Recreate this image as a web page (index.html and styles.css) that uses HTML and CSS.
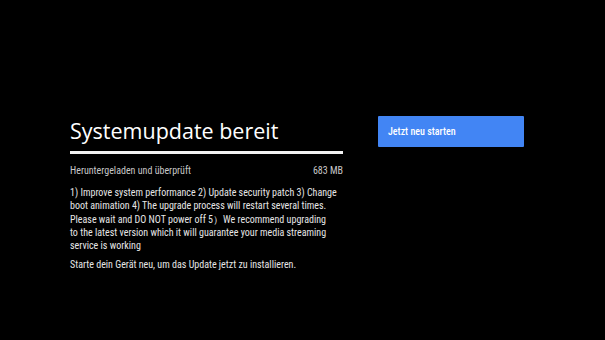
FILE: index.html
```html
<!DOCTYPE html>
<html lang="de">
<head>
    <meta charset="UTF-8">
    <meta name="viewport" content="width=device-width, initial-scale=1.0">
    <title>Systemupdate</title>
    <link rel="stylesheet" href="styles.css">
</head>
<body>
    <div class="screen">
        <div class="info">
            <h1 class="title">Systemupdate bereit</h1>
            <div class="progress"></div>
            <div class="status">
                <span>Heruntergeladen und überprüft</span>
                <span>683 MB</span>
            </div>
            <p class="notes">1) Improve system performance 2) Update security patch 3) Change<br>boot animation 4) The upgrade process will restart several times.<br>Please wait and DO NOT power off 5）We recommend upgrading<br>to the latest version which it will guarantee your media streaming<br>service is working</p>
            <p class="hint">Starte dein Gerät neu, um das Update jetzt zu installieren.</p>
        </div>
        <div class="actions">
            <button class="restart">Jetzt neu starten</button>
        </div>
    </div>
</body>
</html>
```

FILE: styles.css
```css
html, body {
    margin: 0;
    background: #000;
}
body {
    font-family: 'Roboto Condensed', Roboto, sans-serif;
    font-stretch: condensed;
    color: #fff;
    width: 605px;
    height: 340px;
    overflow: hidden;
}
.screen {
    display: flex;
    gap: 35px;
    padding: 116px 0 0 70px;
}
.info {
    width: 273px;
}
.title {
    margin: 0;
    font-family: 'Open Sans', sans-serif;
    font-stretch: normal;
    font-size: 21.5px;
    font-weight: 400;
    line-height: 30px;
}
.progress {
    height: 3px;
    background: #f2f2f2;
    margin-top: 5px;
}
.status {
    display: flex;
    justify-content: space-between;
    font-size: 10px;
    color: #c8c8c8;
    margin-top: 10px;
    line-height: 14px;
}
.notes {
    margin: 8px 0 0;
    font-size: 10px;
    line-height: 13.3px;
    color: #e6e6e6;
    white-space: nowrap;
}
.hint {
    margin: 6px 0 0;
    font-size: 10px;
    line-height: 14px;
    color: #e6e6e6;
}
.restart {
    width: 146px;
    height: 31px;
    background: #4285f4;
    border: none;
    border-radius: 1px;
    color: #fff;
    font-family: 'Roboto Condensed', Roboto, sans-serif;
    font-stretch: condensed;
    font-size: 10px;
    font-weight: 500;
    text-align: left;
    padding: 0 10px;
}
```
